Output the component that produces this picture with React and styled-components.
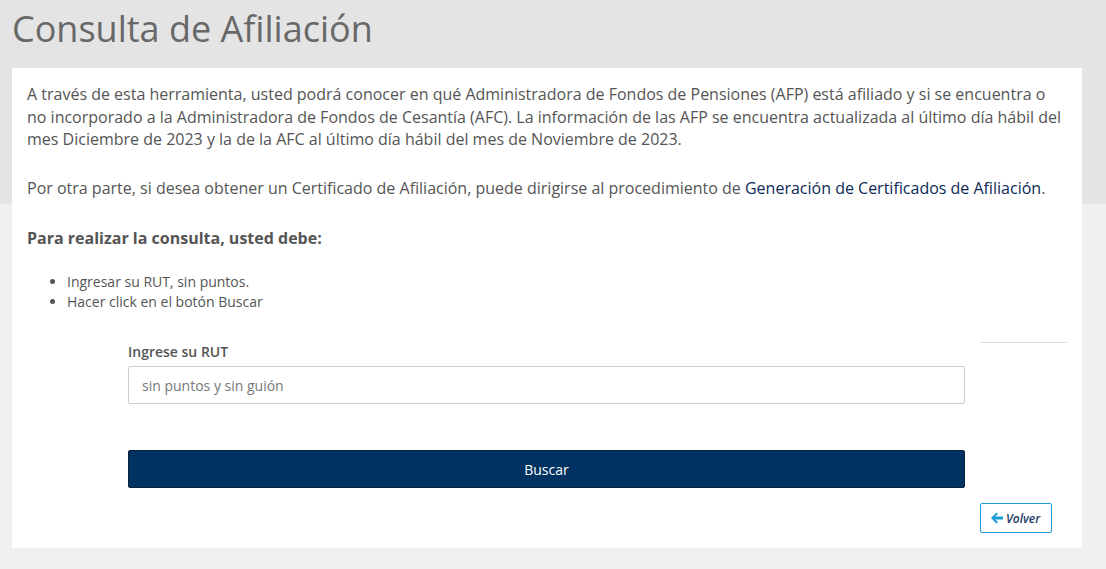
import styled, { createGlobalStyle } from "styled-components";

const GlobalStyle = createGlobalStyle`
  html, body {
    margin: 0;
    padding: 0;
  }
  body {
    font-family: "Open Sans", "Liberation Sans", sans-serif;
    background: linear-gradient(to bottom, #e4e4e4 0, #e4e4e4 204px, #f0f0f0 204px);
    min-height: 569px;
    color: #555;
  }
`;

const Page = styled.div`
  padding: 0 24px 0 12px;
`;

const Title = styled.h1`
  margin: 0;
  padding-top: 8px;
  height: 68px;
  box-sizing: border-box;
  font-size: 36px;
  font-weight: 400;
  line-height: 42px;
  color: #686868;
`;

const Card = styled.div`
  background: #fff;
  padding: 15px 15px 15px;
  height: 480px;
  box-sizing: border-box;
`;

const Paragraph = styled.p`
  margin: 0 0 ${(p) => p.$gap || 26}px;
  font-size: 16px;
  line-height: 22.5px;
  color: #555;
`;

const Link = styled.a`
  color: #0b2a55;
  text-decoration: none;
`;

const Subtitle = styled.p`
  margin: 0 0 23px;
  font-size: 16px;
  font-weight: 700;
  line-height: 22px;
  color: #555;
`;

const List = styled.ul`
  margin: 0;
  padding-left: 40px;
  font-size: 14px;
  line-height: 20px;
  color: #555;
`;

const FormRow = styled.div`
  display: flex;
  gap: 15px;
  margin-top: 21px;
`;

const FormCol = styled.div`
  margin-left: 101px;
  flex: 1;
  padding-top: 9px;
`;

const SideCol = styled.div`
  width: 87px;
  padding-top: 9px;
  display: flex;
  flex-direction: column;
  align-items: flex-start;
`;

const Rule = styled.hr`
  width: 100%;
  margin: 0;
  border: 0;
  border-top: 1px solid #dcdcdc;
`;

const Label = styled.label`
  display: block;
  font-size: 14px;
  font-weight: 600;
  line-height: 20px;
  color: #555;
  margin-bottom: 4px;
`;

const Input = styled.input`
  display: block;
  width: 100%;
  height: 38px;
  box-sizing: border-box;
  border: 1px solid #ccc;
  border-radius: 2px;
  padding: 0 13px;
  font-family: "Open Sans", "Liberation Sans", sans-serif;
  font-size: 14px;
  color: #555;
  &::placeholder {
    color: #777;
  }
`;

const SearchButton = styled.button`
  display: block;
  width: 100%;
  height: 38px;
  margin-top: 46px;
  background: #003263;
  border: 1px solid #0a1f38;
  border-radius: 2px;
  color: #fff;
  font-family: "Open Sans", "Liberation Sans", sans-serif;
  font-size: 14px;
`;

const BackButton = styled.button`
  margin-top: 160px;
  display: flex;
  align-items: center;
  gap: 3px;
  height: 30px;
  width: 72px;
  padding: 0 0 0 10px;
  background: #fff;
  border: 1px solid #1a9ad6;
  border-radius: 2px;
  font-family: "Open Sans", "Liberation Sans", sans-serif;
  font-size: 12px;
  font-style: italic;
  font-weight: 600;
  color: #243a6a;
`;

function ArrowLeft() {
  return (
    <svg width="12" height="12" viewBox="0 0 12 12" aria-hidden="true">
      <path fill="#1a9ad6" d="M0 6 L5.5 0.5 L7 2 L4.2 4.6 H12 V7.4 H4.2 L7 10 L5.5 11.5 Z" />
    </svg>
  );
}

export default function App() {
  return (
    <>
      <GlobalStyle />
      <Page>
        <Title>Consulta de Afiliación</Title>
        <Card>
          <Paragraph>
            A través de esta herramienta, usted podrá conocer en qué Administradora de Fondos de
            Pensiones (AFP) está afiliado y si se encuentra o no incorporado a la Administradora de
            Fondos de Cesantía (AFC). La información de las AFP se encuentra actualizada al último
            día hábil del mes Diciembre de 2023 y la de la AFC al último día hábil del mes de
            Noviembre de 2023.
          </Paragraph>
          <Paragraph $gap={28}>
            Por otra parte, si desea obtener un Certificado de Afiliación, puede dirigirse al
            procedimiento de <Link href="#">Generación de Certificados de Afiliación</Link>.
          </Paragraph>
          <Subtitle>Para realizar la consulta, usted debe:</Subtitle>
          <List>
            <li>Ingresar su RUT, sin puntos.</li>
            <li>Hacer click en el botón Buscar</li>
          </List>
          <FormRow>
            <FormCol>
              <Label htmlFor="rut">Ingrese su RUT</Label>
              <Input id="rut" placeholder="sin puntos y sin guión" />
              <SearchButton type="button">Buscar</SearchButton>
            </FormCol>
            <SideCol>
              <Rule />
              <BackButton type="button">
                <ArrowLeft />
                Volver
              </BackButton>
            </SideCol>
          </FormRow>
        </Card>
      </Page>
    </>
  );
}
